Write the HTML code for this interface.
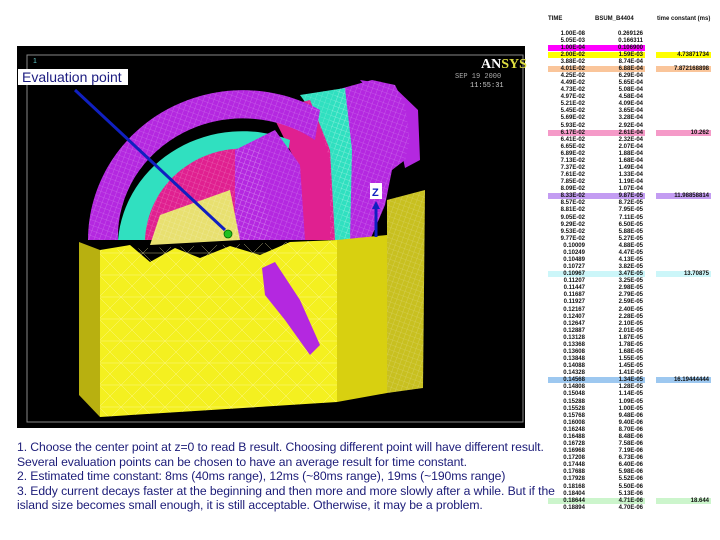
<!DOCTYPE html>
<html><head><meta charset="utf-8">
<style>
*{margin:0;padding:0;box-sizing:border-box}
body{width:720px;height:540px;background:#fff;position:relative;overflow:hidden;font-family:"Liberation Sans",sans-serif}
#tbl{position:absolute;left:0;top:30.5px;width:720px}
.r{position:relative;height:7.09px;font-size:6px;font-weight:bold;line-height:7px;color:#111}
.r span{position:absolute;top:0;height:6px;line-height:6px}
.a{left:548px;width:39px;text-align:right;padding-right:2px}
.b{left:587px;width:58px;text-align:right;padding-right:2px}
.c{left:656px;width:55px;text-align:right;padding-right:2px}
.hd{position:absolute;top:16px;font-size:6px;font-weight:bold;color:#111}
.txt{position:absolute;left:17px;top:440px;font-size:12.2px;line-height:14.6px;color:#1c1c78;white-space:nowrap;letter-spacing:-0.08px}
</style></head><body>
<svg width="720" height="540" style="position:absolute;left:0;top:0">
<defs>
<pattern id="mesh" width="5" height="5" patternUnits="userSpaceOnUse" patternTransform="rotate(20)">
<path d="M0 0H5M0 0V5" stroke="#fff" stroke-width="0.6" opacity="0.7"/></pattern>
<pattern id="ymesh" width="22" height="22" patternUnits="userSpaceOnUse">
<path d="M0 0L22 22M22 0L0 22M0 11H22" stroke="#fff8b0" stroke-width="0.5" opacity="0.7"/></pattern>
</defs>
<rect x="17" y="46" width="508" height="382" fill="#000"/>
<rect x="27" y="55" width="496" height="367" fill="none" stroke="#888" stroke-width="1"/>
<text x="33" y="63" font-size="7" fill="#6cc">1</text>
<g id="parts">
<path d="M336 90 L372 80 L395 85 L405 105 L410 140 L405 160 L392 170 L385 205 L370 240 L345 240 L340 180 L330 120 Z" fill="#b428e0"/>
<path d="M360 80 L392 85 L418 110 L420 160 L405 168 L395 120 Z" fill="#b428e0"/>
<path d="M300 95 L345 88 L352 150 L350 240 L330 240 L330 160 L318 120 Z" fill="#30e0c0"/>
<path d="M270 110 L310 100 L330 150 L335 240 L300 240 L300 170 Z" fill="#e02090"/>
<path d="M88 240 A155 150 0 0 1 320 110 L315 140 A125 118 0 0 0 118 240 Z" fill="#b428e0"/>
<path d="M118 240 A125 118 0 0 1 290 140 L285 170 A98 95 0 0 0 145 240 Z" fill="#30e0c0"/>
<path d="M145 240 A98 95 0 0 1 260 150 L270 240 Z" fill="#e02090"/>
<path d="M235 150 L275 130 L300 165 L305 240 L235 240 Z" fill="#b428e0"/>
<path d="M160 215 L230 190 L240 240 L150 245 Z" fill="#e8e070"/>
</g>
<g opacity="0.55">
<path d="M336 90 L372 80 L395 85 L405 105 L410 140 L405 160 L392 170 L385 205 L370 240 L345 240 L340 180 L330 120 Z" fill="url(#mesh)"/>
<path d="M300 95 L345 88 L352 150 L350 240 L330 240 L330 160 L318 120 Z" fill="url(#mesh)"/>
<path d="M88 240 A155 150 0 0 1 320 110 L315 140 A125 118 0 0 0 118 240 Z" fill="url(#mesh)"/>
<path d="M145 240 A98 95 0 0 1 260 150 L270 240 Z" fill="url(#mesh)"/>
<path d="M235 150 L275 130 L300 165 L305 240 L235 240 Z" fill="url(#mesh)"/>
</g>
<path d="M387 200 L425 190 L423 388 L387 393 Z" fill="#c8c020"/>
<path d="M387 200 L425 190 L423 388 L387 393 Z" fill="url(#mesh)" opacity="0.5"/>
<path d="M337 240 L387 235 L387 393 L337 402 Z" fill="#d8d010"/>
<path d="M79 242 L100 250 L100 417 L79 395 Z" fill="#b8b010"/>
<path d="M100 250 L130 245 L150 262 L175 248 L200 258 L230 246 L260 255 L290 242 L337 240 L337 402 L100 417 Z" fill="#f4f020"/>
<path d="M100 250 L337 240 L337 402 L100 417 Z" fill="url(#ymesh)"/>
<path d="M262 268 L275 262 L300 300 L320 345 L310 355 L285 320 L265 295 Z" fill="#b428e0"/>
<line x1="75" y1="90" x2="225" y2="230" stroke="#1020c0" stroke-width="3"/>
<circle cx="228" cy="234" r="4" fill="#20c020" stroke="#060" stroke-width="0.8"/>
<line x1="376" y1="237" x2="376" y2="208" stroke="#1020c0" stroke-width="3"/>
<path d="M372 209 L376 201 L380 209 Z" fill="#1020c0"/>
<rect x="370" y="183" width="12" height="16" fill="#fff"/>
<text x="372" y="196" font-size="11" font-weight="bold" fill="#1020c0" font-family="Liberation Sans">Z</text>
<rect x="18" y="69" width="110" height="16" fill="#fff"/>
<text x="22" y="82" font-size="14" fill="#1c1c80" font-family="Liberation Sans">Evaluation point</text>
<text x="481" y="68" font-size="14" font-weight="bold" fill="#fff" font-family="Liberation Serif">AN<tspan fill="#e0e040">SYS</tspan></text>
<text x="455" y="78" font-size="7" fill="#aaa" font-family="Liberation Mono">SEP 19 2000</text>
<text x="470" y="87" font-size="7" fill="#ccc" font-family="Liberation Mono">11:55:31</text>
</svg>
<div class="hd" style="left:548px">TIME</div>
<div class="hd" style="left:595px">BSUM_B4404</div>
<div class="hd" style="left:657px">time constant (ms)</div>
<div id="tbl">
<div class="r"><span class="a">1.00E-08</span><span class="b">0.269126</span></div>
<div class="r"><span class="a">5.05E-03</span><span class="b">0.166311</span></div>
<div class="r"><span class="a" style="background:#ff00ff">1.00E-04</span><span class="b" style="background:#ff00ff">0.106900</span></div>
<div class="r"><span class="a" style="background:#ffff00">2.00E-02</span><span class="b" style="background:#ffff00">1.59E-03</span><span class="c" style="background:#ffff00">4.73871734</span></div>
<div class="r"><span class="a">3.88E-02</span><span class="b">8.74E-04</span></div>
<div class="r"><span class="a" style="background:#fac59a">4.01E-02</span><span class="b" style="background:#fac59a">6.88E-04</span><span class="c" style="background:#fac59a">7.872168898</span></div>
<div class="r"><span class="a">4.25E-02</span><span class="b">6.29E-04</span></div>
<div class="r"><span class="a">4.49E-02</span><span class="b">5.65E-04</span></div>
<div class="r"><span class="a">4.73E-02</span><span class="b">5.08E-04</span></div>
<div class="r"><span class="a">4.97E-02</span><span class="b">4.58E-04</span></div>
<div class="r"><span class="a">5.21E-02</span><span class="b">4.09E-04</span></div>
<div class="r"><span class="a">5.45E-02</span><span class="b">3.65E-04</span></div>
<div class="r"><span class="a">5.69E-02</span><span class="b">3.28E-04</span></div>
<div class="r"><span class="a">5.93E-02</span><span class="b">2.92E-04</span></div>
<div class="r"><span class="a" style="background:#f59ac8">6.17E-02</span><span class="b" style="background:#f59ac8">2.61E-04</span><span class="c" style="background:#f59ac8">10.262</span></div>
<div class="r"><span class="a">6.41E-02</span><span class="b">2.32E-04</span></div>
<div class="r"><span class="a">6.65E-02</span><span class="b">2.07E-04</span></div>
<div class="r"><span class="a">6.89E-02</span><span class="b">1.88E-04</span></div>
<div class="r"><span class="a">7.13E-02</span><span class="b">1.68E-04</span></div>
<div class="r"><span class="a">7.37E-02</span><span class="b">1.49E-04</span></div>
<div class="r"><span class="a">7.61E-02</span><span class="b">1.33E-04</span></div>
<div class="r"><span class="a">7.85E-02</span><span class="b">1.19E-04</span></div>
<div class="r"><span class="a">8.09E-02</span><span class="b">1.07E-04</span></div>
<div class="r"><span class="a" style="background:#c39cf2">8.33E-02</span><span class="b" style="background:#c39cf2">9.87E-05</span><span class="c" style="background:#c39cf2">11.98858814</span></div>
<div class="r"><span class="a">8.57E-02</span><span class="b">8.72E-05</span></div>
<div class="r"><span class="a">8.81E-02</span><span class="b">7.95E-05</span></div>
<div class="r"><span class="a">9.05E-02</span><span class="b">7.11E-05</span></div>
<div class="r"><span class="a">9.29E-02</span><span class="b">6.50E-05</span></div>
<div class="r"><span class="a">9.53E-02</span><span class="b">5.88E-05</span></div>
<div class="r"><span class="a">9.77E-02</span><span class="b">5.27E-05</span></div>
<div class="r"><span class="a">0.10009</span><span class="b">4.88E-05</span></div>
<div class="r"><span class="a">0.10249</span><span class="b">4.47E-05</span></div>
<div class="r"><span class="a">0.10489</span><span class="b">4.13E-05</span></div>
<div class="r"><span class="a">0.10727</span><span class="b">3.82E-05</span></div>
<div class="r"><span class="a" style="background:#ccf6f9">0.10967</span><span class="b" style="background:#ccf6f9">3.47E-05</span><span class="c" style="background:#ccf6f9">13.70875</span></div>
<div class="r"><span class="a">0.11207</span><span class="b">3.25E-05</span></div>
<div class="r"><span class="a">0.11447</span><span class="b">2.98E-05</span></div>
<div class="r"><span class="a">0.11687</span><span class="b">2.79E-05</span></div>
<div class="r"><span class="a">0.11927</span><span class="b">2.59E-05</span></div>
<div class="r"><span class="a">0.12167</span><span class="b">2.40E-05</span></div>
<div class="r"><span class="a">0.12407</span><span class="b">2.28E-05</span></div>
<div class="r"><span class="a">0.12647</span><span class="b">2.10E-05</span></div>
<div class="r"><span class="a">0.12887</span><span class="b">2.01E-05</span></div>
<div class="r"><span class="a">0.13128</span><span class="b">1.87E-05</span></div>
<div class="r"><span class="a">0.13368</span><span class="b">1.78E-05</span></div>
<div class="r"><span class="a">0.13608</span><span class="b">1.68E-05</span></div>
<div class="r"><span class="a">0.13848</span><span class="b">1.55E-05</span></div>
<div class="r"><span class="a">0.14088</span><span class="b">1.45E-05</span></div>
<div class="r"><span class="a">0.14328</span><span class="b">1.41E-05</span></div>
<div class="r"><span class="a" style="background:#9dc8f0">0.14568</span><span class="b" style="background:#9dc8f0">1.34E-05</span><span class="c" style="background:#9dc8f0">16.19444444</span></div>
<div class="r"><span class="a">0.14808</span><span class="b">1.28E-05</span></div>
<div class="r"><span class="a">0.15048</span><span class="b">1.14E-05</span></div>
<div class="r"><span class="a">0.15288</span><span class="b">1.09E-05</span></div>
<div class="r"><span class="a">0.15528</span><span class="b">1.00E-05</span></div>
<div class="r"><span class="a">0.15768</span><span class="b">9.48E-06</span></div>
<div class="r"><span class="a">0.16008</span><span class="b">9.40E-06</span></div>
<div class="r"><span class="a">0.16248</span><span class="b">8.70E-06</span></div>
<div class="r"><span class="a">0.16488</span><span class="b">8.48E-06</span></div>
<div class="r"><span class="a">0.16728</span><span class="b">7.58E-06</span></div>
<div class="r"><span class="a">0.16968</span><span class="b">7.19E-06</span></div>
<div class="r"><span class="a">0.17208</span><span class="b">6.73E-06</span></div>
<div class="r"><span class="a">0.17448</span><span class="b">6.40E-06</span></div>
<div class="r"><span class="a">0.17688</span><span class="b">5.98E-06</span></div>
<div class="r"><span class="a">0.17928</span><span class="b">5.52E-06</span></div>
<div class="r"><span class="a">0.18168</span><span class="b">5.50E-06</span></div>
<div class="r"><span class="a">0.18404</span><span class="b">5.13E-06</span></div>
<div class="r"><span class="a" style="background:#ccf5cc">0.18644</span><span class="b" style="background:#ccf5cc">4.71E-06</span><span class="c" style="background:#ccf5cc">18.644</span></div>
<div class="r"><span class="a">0.18894</span><span class="b">4.70E-06</span></div>
</div>
<div class="txt">1. Choose the center point at z=0 to read B result. Choosing different point will have different result.<br>Several evaluation points can be chosen to have an average result for time constant.<br>2. Estimated time constant: 8ms (40ms range), 12ms (~80ms range), 19ms (~190ms range)<br>3. Eddy current decays faster at the beginning and then more and more slowly after a while. But if the<br>island size becomes small enough, it is still acceptable. Otherwise, it may be a problem.</div>
</body></html>
